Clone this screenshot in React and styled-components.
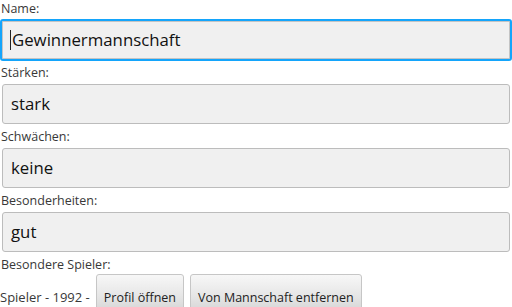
import React from "react";
import styled, { createGlobalStyle } from "styled-components";

const GlobalStyle = createGlobalStyle`
  html, body {
    margin: 0;
    padding: 0;
    background: #ffffff;
    overflow: hidden;
  }
  body {
    font-family: "Open Sans", "Noto Sans", sans-serif;
  }
`;

const Page = styled.div`
  width: 512px;
  height: 307px;
  overflow: hidden;
  display: flex;
  flex-direction: column;
`;

const Field = styled.div`
  display: flex;
  flex-direction: column;
`;

const Label = styled.div`
  font-size: 12.5px;
  line-height: 17px;
  color: #383838;
  height: ${p => (p.$first ? 20 : 24)}px;
  box-sizing: border-box;
  padding: ${p => (p.$first ? 0 : 4)}px 0 0 1px;
`;

const Input = styled.div`
  box-sizing: border-box;
  height: ${p => (p.$focused ? 42 : 40)}px;
  margin: ${p => (p.$focused ? "-1px 0 -1px 0" : "0 2px")};
  background: #f0f0f0;
  border: ${p => (p.$focused ? "2px solid #14a5fb" : "1px solid #bcbcbc")};
  border-radius: 3px;
  box-shadow: ${p => (p.$focused ? "inset 0 0 0 1px #c4c4c4" : "none")};
  display: flex;
  align-items: center;
  padding-left: 8px;
  padding-bottom: 1px;
  font-size: 16.8px;
  color: #111;
`;

const Caret = styled.span`
  display: inline-block;
  width: 1px;
  height: 20px;
  background: #222;
  margin-right: 1px;
`;

const Row = styled.div`
  display: flex;
  align-items: center;
  gap: 6px;
  margin-top: 1px;
`;

const PlayerText = styled.span`
  font-size: 13px;
  color: #383838;
  margin-top: 2px;
`;

const Button = styled.button`
  font-family: "Open Sans", "Noto Sans", sans-serif;
  font-size: 12.5px;
  color: #222;
  height: 44px;
  padding: 2px 7px 0 7px;
  border: 1px solid #c6c6c6;
  border-radius: 3px;
  background: linear-gradient(#f7f7f7, #e6e6e6 50%, #d0d0d0);
  display: flex;
  align-items: center;
`;

const fields = [
  { label: "Name:", value: "Gewinnermannschaft", focused: true },
  { label: "Stärken:", value: "stark" },
  { label: "Schwächen:", value: "keine" },
  { label: "Besonderheiten:", value: "gut" },
];

export default function App() {
  return (
    <>
      <GlobalStyle />
      <Page>
        {fields.map((f, i) => (
          <Field key={f.label}>
            <Label $first={i === 0}>{f.label}</Label>
            <Input $focused={f.focused}>
              {f.focused && <Caret />}
              {f.value}
            </Input>
          </Field>
        ))}
        <Label>Besondere Spieler:</Label>
        <Row>
          <PlayerText>Spieler - 1992 -</PlayerText>
          <Button>Profil öffnen</Button>
          <Button>Von Mannschaft entfernen</Button>
        </Row>
      </Page>
    </>
  );
}
